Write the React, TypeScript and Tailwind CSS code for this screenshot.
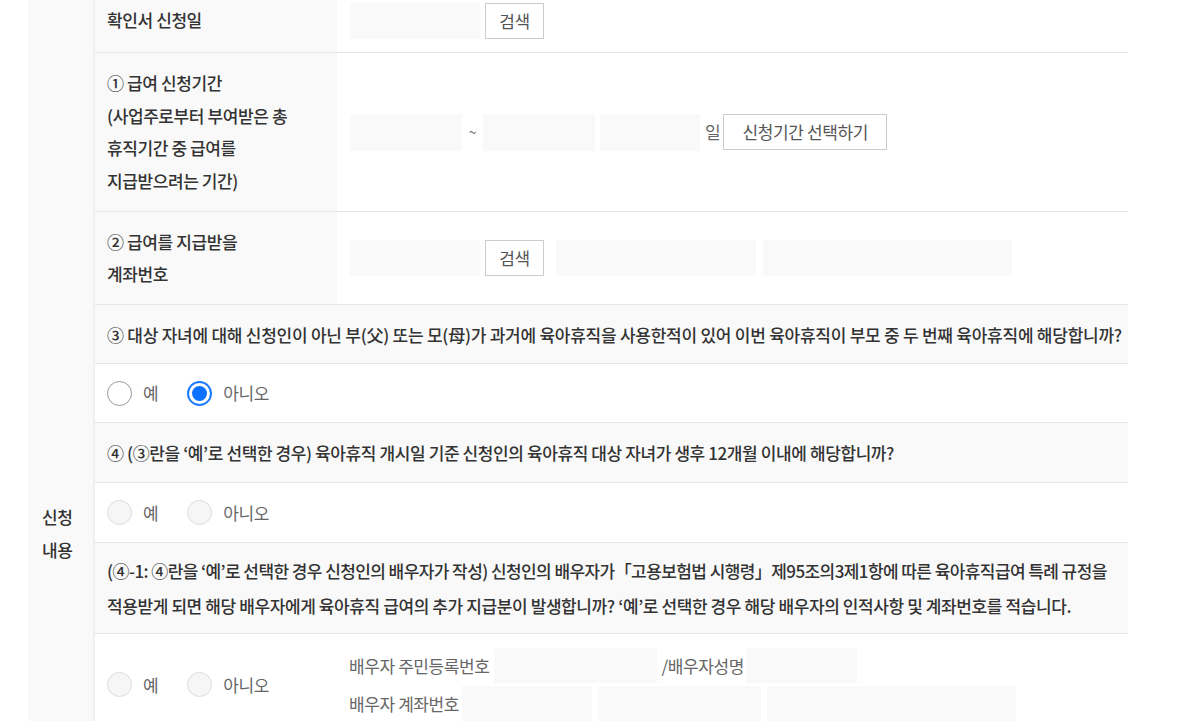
import type { ReactNode } from "react";

// Formulaire "신청 내용" (육아휴직 급여 신청서) – vue partielle scrollée
const FONT = "font-['Noto_Sans_CJK_KR','Noto_Sans',sans-serif]";

function Field({ w, h = "h-[36px]" }: { w: string; h?: string }) {
  return <span className={`block ${w} ${h} bg-[#f9f9f9] shrink-0`} />;
}

function Btn({ children, w }: { children: ReactNode; w: string }) {
  return (
    <button
      type="button"
      className={`${w} h-[36px] shrink-0 border border-[#cccccc] bg-white text-[17px] text-[#555] tracking-[-0.4px]`}
    >
      {children}
    </button>
  );
}

type RadioState = "off" | "on" | "disabled";

function Radio({ state, label }: { state: RadioState; label: string }) {
  return (
    <label className="flex items-center gap-[11px]">
      {state === "on" ? (
        <span className="w-[25px] h-[25px] rounded-full border-2 border-[#1a7bff] bg-white flex items-center justify-center">
          <span className="w-[15px] h-[15px] rounded-full bg-[#0a70ff]" />
        </span>
      ) : state === "off" ? (
        <span className="w-[25px] h-[25px] rounded-full border-[1.5px] border-[#9a9a9a] bg-white" />
      ) : (
        <span className="w-[25px] h-[25px] rounded-full border-[1.5px] border-[#dddddd] bg-[#f6f6f6]" />
      )}
      <span className="text-[#666]">{label}</span>
    </label>
  );
}

function RadioPair({ yes, no }: { yes: RadioState; no: RadioState }) {
  return (
    <div className="flex items-center gap-[29px]">
      <Radio state={yes} label="예" />
      <Radio state={no} label="아니오" />
    </div>
  );
}

function LabelRow({ h, label, children }: { h: string; label: ReactNode; children: ReactNode }) {
  return (
    <div className={`flex ${h} border-b border-[#e6e6e6]`}>
      <div className="w-[242px] shrink-0 bg-[#f9f9f9] pl-[12px] flex items-center leading-[32.5px] text-[#333] font-medium">
        <div>{label}</div>
      </div>
      <div className="flex-1 pl-[13px] flex items-center">{children}</div>
    </div>
  );
}

function Question({ h, children }: { h: string; children: ReactNode }) {
  return (
    <div className={`${h} bg-[#f9f9f9] border-b border-[#e6e6e6] pl-[12px] flex items-center text-[#333] font-medium leading-[35px] whitespace-nowrap`}>
      <div>{children}</div>
    </div>
  );
}

export default function App() {
  return (
    <div className={`min-h-screen bg-white overflow-hidden ${FONT} text-[17px] tracking-[-0.4px]`}>
      <div className="-mt-[11px] ml-[28px] w-[1100px] flex">
        <div className="w-[67px] shrink-0 bg-[#f9f9f9] border-r-2 border-[#efefef] flex items-center pl-[14px] leading-[33px] text-[#333] font-medium">
          <div>
            신청
            <br />
            내용
          </div>
        </div>

        <div className="flex-1">
          <LabelRow h="h-[64px]" label="확인서 신청일">
            <div className="flex items-center gap-[5px]">
              <Field w="w-[130px]" h="h-[37px]" />
              <Btn w="w-[59px]">검색</Btn>
            </div>
          </LabelRow>

          <LabelRow
            h="h-[159px]"
            label={
              <>
                ① 급여 신청기간
                <br />
                (사업주로부터 부여받은 총
                <br />
                휴직기간 중 급여를
                <br />
                지급받으려는 기간)
              </>
            }
          >
            <div className="flex items-center">
              <Field w="w-[112px]" h="h-[37px]" />
              <span className="w-[21px] text-center text-[#666] text-[13px]">~</span>
              <Field w="w-[112px]" h="h-[37px]" />
              <span className="w-[5px]" />
              <Field w="w-[100px]" h="h-[37px]" />
              <span className="pl-[5px] pr-[3px] text-[#666]">일</span>
              <Btn w="w-[164px]">신청기간 선택하기</Btn>
            </div>
          </LabelRow>

          <LabelRow
            h="h-[93px]"
            label={
              <>
                ② 급여를 지급받을
                <br />
                계좌번호
              </>
            }
          >
            <div className="flex items-center">
              <Field w="w-[130px]" />
              <span className="w-[5px]" />
              <Btn w="w-[59px]">검색</Btn>
              <span className="w-[12px]" />
              <Field w="w-[200px]" />
              <span className="w-[7px]" />
              <Field w="w-[249px]" />
            </div>
          </LabelRow>

          <Question h="h-[59px]">
            <span className="tracking-[-0.25px]">
              ③ 대상 자녀에 대해 신청인이 아닌 부(父) 또는 모(母)가 과거에 육아휴직을 사용한적이 있어 이번 육아휴직이 부모 중 두 번째 육아휴직에 해당합니까?
            </span>
          </Question>
          <div className="h-[59px] border-b border-[#e6e6e6] pl-[12px] flex items-center">
            <RadioPair yes="off" no="on" />
          </div>

          <Question h="h-[60px]">
            ④ (③란을 ‘예’로 선택한 경우) 육아휴직 개시일 기준 신청인의 육아휴직 대상 자녀가 생후 12개월 이내에 해당합니까?
          </Question>
          <div className="h-[60px] border-b border-[#e6e6e6] pl-[12px] flex items-center">
            <RadioPair yes="disabled" no="disabled" />
          </div>

          <Question h="h-[91px]">
            <span className="tracking-[-0.58px]">
              (④-1: ④란을 ‘예’로 선택한 경우 신청인의 배우자가 작성) 신청인의 배우자가「고용보험법 시행령」제95조의3제1항에 따른 육아휴직급여 특례 규정을
            </span>
            <br />
            적용받게 되면 해당 배우자에게 육아휴직 급여의 추가 지급분이 발생합니까? ‘예’로 선택한 경우 해당 배우자의 인적사항 및 계좌번호를 적습니다.
          </Question>
          <div className="flex items-center h-[102px] border-b border-[#e6e6e6]">
            <div className="w-[254px] shrink-0 pl-[12px]">
              <RadioPair yes="disabled" no="disabled" />
            </div>
            <div className="flex flex-col gap-[3px] text-[#666]">
              <div className="flex items-center h-[35px]">
                <span className="pr-[4px]">배우자 주민등록번호</span>
                <Field w="w-[163px]" h="h-[35px]" />
                <span className="pl-[5px] pr-[2px]">/배우자성명</span>
                <Field w="w-[111px]" h="h-[35px]" />
              </div>
              <div className="flex items-center h-[35px]">
                <span className="pr-[3px]">배우자 계좌번호</span>
                <Field w="w-[130px]" h="h-[35px]" />
                <span className="w-[6px]" />
                <Field w="w-[163px]" h="h-[35px]" />
                <span className="w-[6px]" />
                <Field w="w-[249px]" h="h-[35px]" />
              </div>
            </div>
          </div>
          <div className="h-[341px]" />
        </div>
      </div>
    </div>
  );
}
